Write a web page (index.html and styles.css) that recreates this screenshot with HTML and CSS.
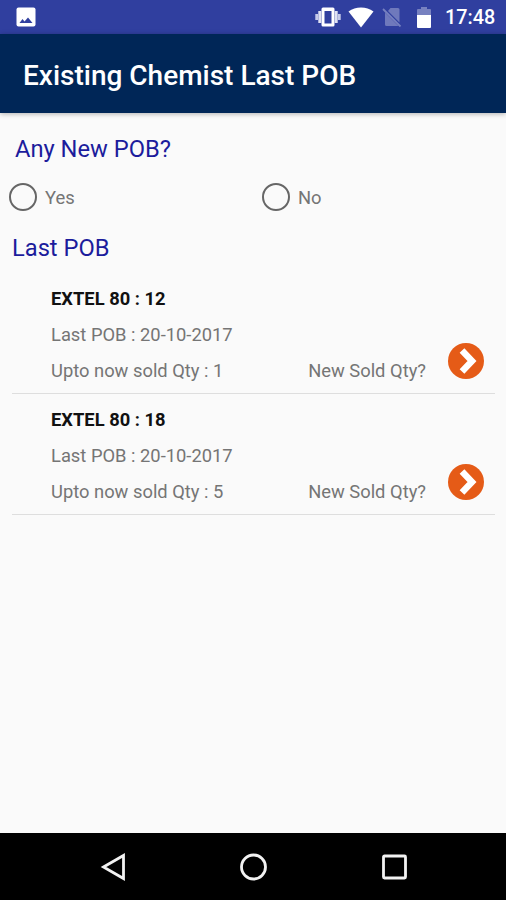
FILE: index.html
```html
<!DOCTYPE html>
<html lang="en">
<head>
    <meta charset="UTF-8">
    <meta name="viewport" content="width=device-width, initial-scale=1.0">
    <title>Existing Chemist Last POB</title>
    <link rel="stylesheet" href="styles.css">
</head>
<body>
    <div class="screen">
        <div class="status-bar">
            <svg class="icon-picture" width="20" height="20" viewBox="0 0 20 20">
                <rect x="0.5" y="0.5" width="19" height="19" rx="2" fill="#fff"/>
                <path d="M3.500 16L6.500 12L8.500 14.500L12 10.500L16.500 16Z" fill="#303f9f"/>
            </svg>
            <div class="status-icons">
                <svg width="26" height="20" viewBox="0 0 26 20">
                    <path d="M8 0.500H18Q19.500 0.500 19.500 2V18Q19.500 19.500 18 19.500H8Q6.500 19.500 6.500 18V2Q6.500 0.500 8 0.500ZM9.500 4V16.500H16.500V4Z" fill="#fff" fill-rule="evenodd"/>
                    <path d="M4.800 4V16M21.200 4V16" stroke="#dfe2f3" stroke-width="3"/>
                    <path d="M1.700 7V13M24.300 7V13" stroke="#c5cae9" stroke-width="2.800"/>
                </svg>
                <svg class="icon-wifi" width="26" height="21" viewBox="0 0 26 21">
                    <path d="M0.500 4.500Q6 0.500 13 0.500T25.500 4.500L13 20.500Z" fill="#fff"/>
                </svg>
                <svg class="icon-sim" width="20" height="20" viewBox="0 0 20 20">
                    <path d="M8.500 1H16Q17.500 1 17.500 2.500V15.500L6 4ZM3 5.500L16.500 19H4.500Q3 19 3 17.500Z" fill="#6f79bc"/>
                    <path d="M1 2L18.500 19.500" stroke="#7781c0" stroke-width="1.800"/>
                </svg>
                <svg class="icon-battery" width="14" height="21" viewBox="0 0 14 21">
                    <path d="M0 3Q0 2 1 2H4V0H10V2H13Q14 2 14 3V8H0Z" fill="#7781c0"/>
                    <path d="M0 8H14V20Q14 21 13 21H1Q0 21 0 20Z" fill="#fff"/>
                </svg>
                <span class="clock">17:48</span>
            </div>
        </div>

        <div class="app-bar">Existing Chemist Last POB</div>

        <div class="content">
            <h2 class="question">Any New POB?</h2>
            <div class="choices">
                <label class="choice"><input type="radio" class="radio" name="pob">Yes</label>
                <label class="choice"><input type="radio" class="radio" name="pob">No</label>
            </div>

            <h2 class="heading">Last POB</h2>
            <div class="list">
                <div class="item">
                    <div class="details">
                        <div class="name">EXTEL 80 : 12</div>
                        <div class="date">Last POB : 20-10-2017</div>
                        <div class="sold">Upto now sold Qty : 1</div>
                    </div>
                    <div class="new-qty">New Sold Qty?</div>
                    <svg class="arrow" width="36" height="36" viewBox="0 0 36 36">
                        <circle cx="18" cy="18" r="18" fill="#e55b17"/>
                        <path d="M14 7.500L24 18L14 28.500" fill="none" stroke="#fff" stroke-width="6.500"/>
                    </svg>
                </div>
                <div class="item">
                    <div class="details">
                        <div class="name">EXTEL 80 : 18</div>
                        <div class="date">Last POB : 20-10-2017</div>
                        <div class="sold">Upto now sold Qty : 5</div>
                    </div>
                    <div class="new-qty">New Sold Qty?</div>
                    <svg class="arrow" width="36" height="36" viewBox="0 0 36 36">
                        <circle cx="18" cy="18" r="18" fill="#e55b17"/>
                        <path d="M14 7.500L24 18L14 28.500" fill="none" stroke="#fff" stroke-width="6.500"/>
                    </svg>
                </div>
            </div>
        </div>

        <div class="nav-bar">
            <svg width="28" height="28" viewBox="0 0 28 28">
                <path d="M5.500 14L25.500 2.500V25.500Z"/>
            </svg>
            <svg width="28" height="28" viewBox="0 0 28 28">
                <circle cx="14.500" cy="14" r="12"/>
            </svg>
            <svg width="28" height="28" viewBox="0 0 28 28">
                <rect x="3.500" y="3" width="22" height="22" rx="1"/>
            </svg>
        </div>
    </div>
</body>
</html>
```
FILE: styles.css
```css
body {
    margin: 0;
    font-family: Roboto, "Liberation Sans", sans-serif;
    background-color: #fafafa;
}
.screen {
    display: flex;
    flex-direction: column;
    width: 506px;
    height: 900px;
    overflow: hidden;
}
.status-bar {
    display: flex;
    justify-content: space-between;
    align-items: center;
    height: 34px;
    padding: 0 11px 0 16px;
    background-color: #303f9f;
}
.status-icons {
    display: flex;
    align-items: center;
}
.icon-wifi {
    margin-left: 7px;
}
.icon-sim {
    margin-left: 8px;
}
.icon-battery {
    margin-left: 15px;
}
.clock {
    width: 50px;
    margin-left: 14px;
    padding-top: 2px;
    font-size: 19.8px;
    font-weight: 500;
    line-height: 30px;
    white-space: nowrap;
    color: #fff;
}
.app-bar {
    height: 79px;
    padding-left: 23px;
    font-size: 28px;
    font-weight: 500;
    line-height: 83px;
    color: #fff;
    background-color: #002657;
    box-shadow: 0 1px 5px rgba(0, 0, 0, 0.3);
}
.content {
    flex: 1;
    padding: 20px 11px 0 12px;
}
.question,
.heading {
    margin: 0;
    font-size: 23.7px;
    font-weight: 400;
    line-height: 32px;
    color: #1c1c9c;
}
.question {
    padding-left: 3px;
}
.choices {
    display: flex;
    margin: 17px -11px 20px -12px;
}
.choice {
    display: flex;
    flex: 1;
    align-items: center;
    gap: 8px;
    height: 30px;
    padding-left: 9px;
    font-size: 18.4px;
    color: #757575;
}
.radio {
    appearance: none;
    box-sizing: border-box;
    width: 28px;
    height: 28px;
    margin: 0;
    border: 2.5px solid #666;
    border-radius: 50%;
}
.list {
    padding-top: 9px;
}
.item {
    display: flex;
    height: 112px;
    padding: 8px 11px 0 39px;
    border-bottom: 1px solid #dedede;
    font-size: 18.35px;
    line-height: 36px;
    color: #757575;
}
.details {
    flex: 1;
}
.name {
    font-weight: 700;
    color: #111;
}
.new-qty {
    margin-top: 72px;
    margin-right: 22px;
}
.arrow {
    margin-top: 62px;
}
.nav-bar {
    display: flex;
    justify-content: center;
    align-items: center;
    gap: 113px;
    height: 67px;
    background-color: #000;
}
.nav-bar svg {
    fill: none;
    stroke: #f2f2f2;
    stroke-width: 2.8;
}
```
